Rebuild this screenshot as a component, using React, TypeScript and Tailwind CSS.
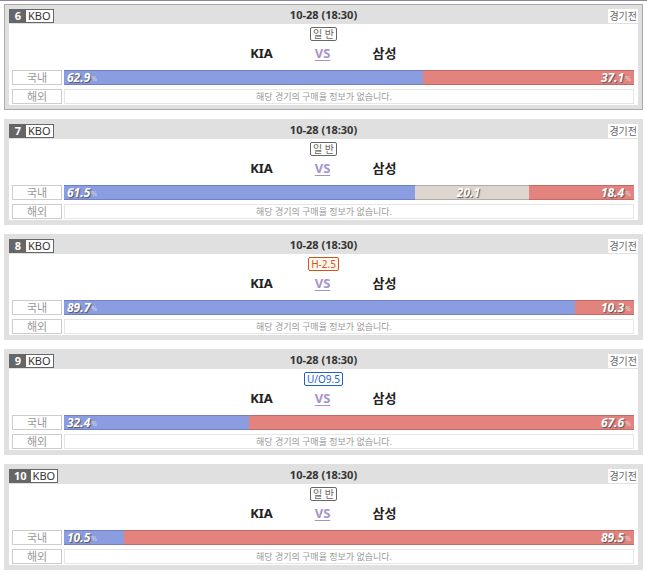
import React from "react";

type Seg = { value: number; tone: "home" | "draw" | "away" };

type Game = {
	no: number;
	league: string;
	time: string;
	status: string;
	kind: "normal" | "handicap" | "overunder";
	kindLabel: string;
	home: string;
	away: string;
	segs: Seg[];
	active?: boolean;
};

const games: Game[] = [
	{
		no: 6,
		league: "KBO",
		time: "10-28 (18:30)",
		status: "경기전",
		kind: "normal",
		kindLabel: "일 반",
		home: "KIA",
		away: "삼성",
		segs: [
			{ value: 62.9, tone: "home" },
			{ value: 37.1, tone: "away" },
		],
		active: true,
	},
	{
		no: 7,
		league: "KBO",
		time: "10-28 (18:30)",
		status: "경기전",
		kind: "normal",
		kindLabel: "일 반",
		home: "KIA",
		away: "삼성",
		segs: [
			{ value: 61.5, tone: "home" },
			{ value: 20.1, tone: "draw" },
			{ value: 18.4, tone: "away" },
		],
	},
	{
		no: 8,
		league: "KBO",
		time: "10-28 (18:30)",
		status: "경기전",
		kind: "handicap",
		kindLabel: "H-2.5",
		home: "KIA",
		away: "삼성",
		segs: [
			{ value: 89.7, tone: "home" },
			{ value: 10.3, tone: "away" },
		],
	},
	{
		no: 9,
		league: "KBO",
		time: "10-28 (18:30)",
		status: "경기전",
		kind: "overunder",
		kindLabel: "U/O9.5",
		home: "KIA",
		away: "삼성",
		segs: [
			{ value: 32.4, tone: "home" },
			{ value: 67.6, tone: "away" },
		],
	},
	{
		no: 10,
		league: "KBO",
		time: "10-28 (18:30)",
		status: "경기전",
		kind: "normal",
		kindLabel: "일 반",
		home: "KIA",
		away: "삼성",
		segs: [
			{ value: 10.5, tone: "home" },
			{ value: 89.5, tone: "away" },
		],
	},
];

const toneClass: Record<Seg["tone"], string> = {
	home: "bg-[#8a9de1] border-[#6f80c4] justify-start pl-[3px]",
	draw: "bg-[#ddd6d0] border-[#b3aba4] justify-center",
	away: "bg-[#e2837e] border-[#c26a66] justify-end pr-[3px]",
};

const kindClass: Record<Game["kind"], string> = {
	normal: "border-[#666] text-[#666] bg-white",
	handicap: "border-[#d2541a] text-[#d2541a] bg-[#fff6ef]",
	overunder: "border-[#1f62c4] text-[#1f62c4] bg-white",
};

const GameCard = ({ game }: { game: Game }) => (
	<div
		className={`mx-[4px] mb-[9px] border px-[4px] pb-[4px] bg-[#e0e0e0] ${
			game.active ? "border-[#a9a9a9]" : "border-[#e0e0e0]"
		}`}
	>
		{/* Header */}
		<div className="relative h-[19px] flex items-center">
			<div className="flex h-[14px] mt-[2px] border border-[#666] text-[11px] leading-[12px]">
				<span className="bg-[#666] text-white font-bold px-[4px] min-w-[16px] text-center">
					{game.no}
				</span>
				<span className="bg-white text-[#333] px-[2px]">{game.league}</span>
			</div>
			<div className="absolute inset-x-0 top-[2px] text-center text-[11px] font-bold text-[#333] leading-[16px]">
				{game.time}
			</div>
			<div className="ml-auto mt-[2px] bg-white h-[14px] px-[1px] text-[10px] leading-[14px] text-[#666]">
				{game.status}
			</div>
		</div>

		{/* Body */}
		<div className="bg-white h-[81px] pt-[3px] px-[3px]">
			<div className="flex justify-center">
				<span
					className={`h-[14px] border rounded-[2px] px-[2px] text-[10px] leading-[12px] ${kindClass[game.kind]}`}
				>
					{game.kindLabel}
				</span>
			</div>
			<div className="h-[25px] flex items-center justify-center text-[13px] font-bold text-[#222]">
				<span className="w-[60px] text-center">{game.home}</span>
				<span className="w-[62px] text-center text-[#a793cc] underline underline-offset-2">
					VS
				</span>
				<span className="w-[62px] text-center">{game.away}</span>
			</div>

			<div className="mt-[4px] flex gap-[2px] pr-[1px]">
				<div className="w-[50px] h-[15px] border border-[#ccc] text-center text-[11px] leading-[13px] text-[#999]">
					국내
				</div>
				<div className="flex-1 flex h-[15px]">
					{game.segs.map((seg, i) => (
						<div
							className={`flex items-center border-y ${toneClass[seg.tone]}`}
							key={`seg-${i}`}
							style={{ width: `${seg.value}%` }}
						>
							<span className="text-white italic font-bold text-[12px] leading-[13px] [text-shadow:1px_1px_1px_#555]">
								{seg.value.toFixed(1)}
							</span>
							<span className="text-[#d8d8d8] text-[7px] leading-[13px] ml-[1px] mt-[2px]">
								%
							</span>
						</div>
					))}
				</div>
			</div>

			<div className="mt-[4px] flex gap-[2px] pr-[1px]">
				<div className="w-[50px] h-[15px] border border-[#ccc] text-center text-[11px] leading-[13px] text-[#999]">
					해외
				</div>
				<div className="flex-1 h-[15px] border border-[#e6e6e6] pr-[50px] text-center text-[9px] leading-[13px] text-[#999]">
					해당 경기의 구매율 정보가 없습니다.
				</div>
			</div>
		</div>
	</div>
);

export default function App() {
	return (
		<div
			className="w-[647px] h-[580px] bg-white overflow-hidden"
			style={{ fontFamily: '"Noto Sans", "Noto Sans CJK KR", sans-serif' }}
		>
			<div className="h-[1px] bg-[#8e84a3] mb-[3px]" />
			{games.map((g) => (
				<GameCard game={g} key={g.no} />
			))}
		</div>
	);
}
